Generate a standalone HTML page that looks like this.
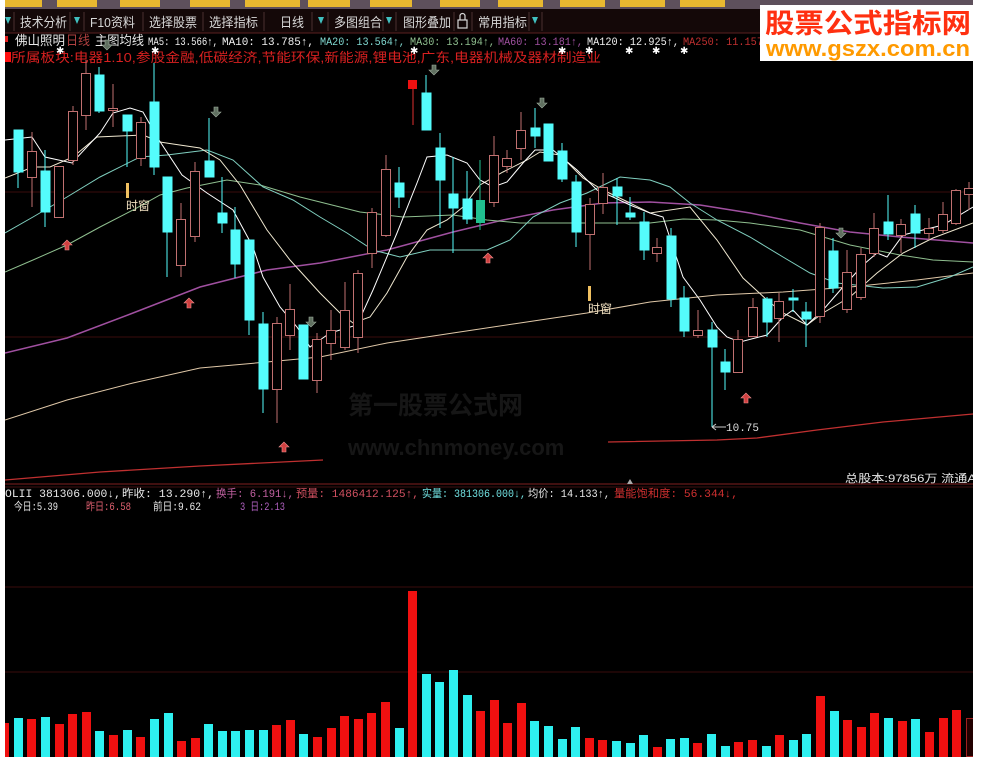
<!DOCTYPE html>
<html><head><meta charset="utf-8"><style>
html,body{margin:0;padding:0;background:#fff;}
svg{display:block;}
text{font-family:"Liberation Sans","Noto Sans CJK SC",sans-serif;}
.m text, text.m{font-family:"Liberation Mono","Noto Sans CJK SC",monospace;}
</style></head><body>
<svg width="987" height="768" viewBox="0 0 987 768" xmlns="http://www.w3.org/2000/svg">
<defs><clipPath id="cl"><rect x="5" y="0" width="968" height="757"/></clipPath></defs>
<rect x="0" y="0" width="987" height="768" fill="#fff"/>
<g clip-path="url(#cl)">
<rect x="0" y="0" width="987" height="757" fill="#000"/>
<rect x="0" y="0" width="987" height="9" fill="#5e505c"/>
<g fill="#e8b830">
<rect x="0" y="0" width="42" height="7"/><rect x="57" y="0" width="40" height="7"/><rect x="120" y="0" width="40" height="7"/><rect x="190" y="0" width="40" height="7"/><rect x="245" y="0" width="55" height="7"/><rect x="308" y="0" width="42" height="7"/><rect x="370" y="0" width="42" height="7"/><rect x="440" y="0" width="40" height="7"/><rect x="498" y="0" width="45" height="7"/><rect x="560" y="0" width="45" height="7"/><rect x="620" y="0" width="45" height="7"/><rect x="680" y="0" width="45" height="7"/></g>
<rect x="0" y="9" width="987" height="24" fill="#140808"/>
<line x1="0" y1="33" x2="987" y2="33" stroke="#5a2020"/>
<g fill="#40c0c0"><path d="M5 17 L11 17 L8 24 Z"/><path d="M74 17 L80 17 L77 24 Z"/><path d="M318 17 L324 17 L321 24 Z"/><path d="M386 17 L392 17 L389 24 Z"/><path d="M532 17 L538 17 L535 24 Z"/></g>
<g stroke="#4a3030"><line x1="14" y1="12" x2="14" y2="31"/><line x1="70" y1="12" x2="70" y2="31"/><line x1="84" y1="12" x2="84" y2="31"/><line x1="143" y1="12" x2="143" y2="31"/><line x1="203" y1="12" x2="203" y2="31"/><line x1="264" y1="12" x2="264" y2="31"/><line x1="312" y1="12" x2="312" y2="31"/><line x1="328" y1="12" x2="328" y2="31"/><line x1="383" y1="12" x2="383" y2="31"/><line x1="396" y1="12" x2="396" y2="31"/><line x1="454" y1="12" x2="454" y2="31"/><line x1="472" y1="12" x2="472" y2="31"/><line x1="529" y1="12" x2="529" y2="31"/><line x1="542" y1="12" x2="542" y2="31"/></g>
<g fill="#d8d8d8" font-size="13">
<text x="20" y="27" textLength="47" lengthAdjust="spacingAndGlyphs">技术分析</text>
<text x="90" y="27" textLength="45" lengthAdjust="spacingAndGlyphs">F10资料</text>
<text x="149" y="27" textLength="48" lengthAdjust="spacingAndGlyphs">选择股票</text>
<text x="209" y="27" textLength="49" lengthAdjust="spacingAndGlyphs">选择指标</text>
<text x="280" y="27" textLength="24" lengthAdjust="spacingAndGlyphs">日线</text>
<text x="334" y="27" textLength="48" lengthAdjust="spacingAndGlyphs">多图组合</text>
<text x="403" y="27" textLength="48" lengthAdjust="spacingAndGlyphs">图形叠加</text>
<text x="478" y="27" textLength="49" lengthAdjust="spacingAndGlyphs">常用指标</text>
</g>
<g fill="none" stroke="#d8d8d8" stroke-width="1.2"><rect x="458" y="20" width="9" height="8"/><path d="M460 20 V16 A2.5 2.5 0 0 1 465 16 V20"/></g>
<rect x="5" y="36" width="3" height="6" fill="#e02020"/>
<text x="15" y="45" fill="#e8e8e8" font-size="13" textLength="50" lengthAdjust="spacingAndGlyphs">佛山照明</text>
<text x="66" y="45" fill="#b04040" font-size="13" textLength="24" lengthAdjust="spacingAndGlyphs">日线</text>
<text x="95" y="45" fill="#e8e8e8" font-size="13" textLength="49" lengthAdjust="spacingAndGlyphs">主图均线</text>
<g font-size="11" class="m">
<text x="148" y="45" fill="#f0f0f0" textLength="70" lengthAdjust="spacingAndGlyphs">MA5: 13.566↑,</text>
<text x="222" y="45" fill="#f0f0f0" textLength="92" lengthAdjust="spacingAndGlyphs">MA10: 13.785↑,</text>
<text x="320" y="45" fill="#80d8d0" textLength="85" lengthAdjust="spacingAndGlyphs">MA20: 13.564↑,</text>
<text x="410" y="45" fill="#90c090" textLength="85" lengthAdjust="spacingAndGlyphs">MA30: 13.194↑,</text>
<text x="498" y="45" fill="#a050a0" textLength="85" lengthAdjust="spacingAndGlyphs">MA60: 13.181↑,</text>
<text x="587" y="45" fill="#f0f0f0" textLength="92" lengthAdjust="spacingAndGlyphs">MA120: 12.925↑,</text>
<text x="683" y="45" fill="#c03030" textLength="80" lengthAdjust="spacingAndGlyphs">MA250: 11.157</text>
</g>
<rect x="5" y="52" width="6" height="10" fill="#ff1010"/>
<text x="11" y="62" fill="#d82020" font-size="13" textLength="590" lengthAdjust="spacingAndGlyphs">所属板块:电器1.10,参股金融,低碳经济,节能环保,新能源,锂电池,广东,电器机械及器材制造业</text>
<g fill="#fff" font-size="10"><text x="56" y="54">✱</text><text x="151" y="54">✱</text><text x="410" y="54">✱</text><text x="558" y="54">✱</text><text x="585" y="54">✱</text><text x="625" y="54">✱</text><text x="652" y="54">✱</text><text x="680" y="54">✱</text></g>
<g stroke="#3a0c0c"><line x1="5" y1="192" x2="973" y2="192"/><line x1="5" y1="337" x2="973" y2="337"/><line x1="5" y1="587" x2="973" y2="587"/><line x1="5" y1="672" x2="973" y2="672"/></g>
<line x1="5" y1="484" x2="973" y2="484" stroke="#802020"/>
<line x1="5" y1="487" x2="973" y2="487" stroke="#401010"/>
<path d="M627 484 L630 479 L633 484 Z" fill="#aaa"/>
<text x="348" y="414" fill="#161616" font-size="25" font-weight="bold">第一股票公式网</text>
<text x="348" y="455" fill="#161616" font-size="22" font-weight="bold">www.chnmoney.com</text>
<g fill="none" stroke-width="1">
<polyline stroke="#a050a0" stroke-width="1.5" points="5,353 67,338 133,313 200,287 267,270 320,263 387,250 453,232 503,220 553,210 603,203 650,202 700,205 750,213 800,223 850,232 900,237 973,243"/>
<polyline stroke="#e0c8a8" points="5,420 67,400 133,383 200,368 267,362 320,357 387,343 453,333 520,323 587,313 650,302 717,295 783,292 850,287 917,280 973,273"/>
<polyline stroke="#8fbf8f" points="5,272 33,260 67,245 100,227 133,210 160,195 187,188 227,180 260,185 300,197 320,202 360,212 403,217 453,215 487,220 520,223 587,223 650,223 683,219 717,220 750,223 800,230 850,245 900,255 933,260 973,262"/>
<polyline stroke="#80d0c0" points="5,233 33,217 67,197 100,177 140,157 167,155 207,150 233,160 263,187 293,200 320,217 347,233 373,250 400,257 430,250 487,250 510,240 533,217 560,203 587,193 620,177 650,180 670,187 690,203 717,220 750,237 783,257 810,273 837,283 883,288 917,287 950,277 973,267"/>
<polyline stroke="#f0e8d0" points="5,178 33,167 50,167 73,157 97,137 143,135 160,142 173,144 200,148 220,160 240,185 267,230 290,260 320,293 340,313 353,323 370,317 387,293 407,257 427,230 447,220 463,207 480,185 503,172 527,160 540,152 560,155 583,178 603,190 630,203 650,213 690,207 717,240 743,278 767,300 783,313 807,325 823,313 850,297 877,273 903,253 933,238 973,223"/>
<polyline stroke="#ffffff" points="5,140 32,137 45,157 72,163 100,133 113,113 130,108 143,112 157,137 182,175 207,193 233,210 253,247 263,277 280,307 297,327 310,347 320,340 330,333 357,325 373,290 397,233 417,183 427,157 447,155 467,163 480,180 493,187 507,182 523,163 535,150 553,150 577,170 597,190 613,197 630,205 650,213 663,217 673,247 683,277 700,300 717,327 727,337 740,342 767,335 783,317 793,310 807,325 823,310 843,287 863,265 877,253 887,257 903,235 923,230 943,225 973,207"/>
<polyline stroke="#c03030" stroke-width="1.3" points="5,480 100,472 200,466 323,460"/>
<polyline stroke="#c03030" stroke-width="1.3" points="608,442 717,440 757,438 817,430 883,422 973,414"/>
</g>
<g stroke="#c07070" fill="#000" stroke-width="1">
<line x1="32" y1="132" x2="32" y2="207"/><rect x="27.5" y="151.5" width="9" height="26"/>
<line x1="59" y1="166" x2="59" y2="217"/><rect x="54.5" y="166.5" width="9" height="51"/>
<line x1="73" y1="106" x2="73" y2="165"/><rect x="68.5" y="111.5" width="9" height="49"/>
<line x1="86" y1="60" x2="86" y2="130"/><rect x="81.5" y="73.5" width="9" height="42"/>
<line x1="113" y1="84" x2="113" y2="127"/><rect x="108.5" y="108.5" width="9" height="2"/>
<line x1="141" y1="117" x2="141" y2="166"/><rect x="136.5" y="122.5" width="9" height="36"/>
<line x1="181" y1="203" x2="181" y2="277"/><rect x="176.5" y="219.5" width="9" height="46"/>
<line x1="195" y1="162" x2="195" y2="242"/><rect x="190.5" y="171.5" width="9" height="65"/>
<line x1="277" y1="317" x2="277" y2="423"/><rect x="272.5" y="323.5" width="9" height="66"/>
<line x1="290" y1="284" x2="290" y2="350"/><rect x="285.5" y="309.5" width="9" height="26"/>
<line x1="317" y1="333" x2="317" y2="393"/><rect x="312.5" y="339.5" width="9" height="41"/>
<line x1="331" y1="310" x2="331" y2="360"/><rect x="326.5" y="330.5" width="9" height="13"/>
<line x1="345" y1="282" x2="345" y2="350"/><rect x="340.5" y="310.5" width="9" height="37"/>
<line x1="358" y1="270" x2="358" y2="353"/><rect x="353.5" y="273.5" width="9" height="64"/>
<line x1="372" y1="208" x2="372" y2="268"/><rect x="367.5" y="212.5" width="9" height="41"/>
<line x1="386" y1="155" x2="386" y2="237"/><rect x="381.5" y="169.5" width="9" height="66"/>
<line x1="494" y1="136" x2="494" y2="207"/><rect x="489.5" y="155.5" width="9" height="47"/>
<line x1="507" y1="150" x2="507" y2="173"/><rect x="502.5" y="158.5" width="9" height="8"/>
<line x1="521" y1="112" x2="521" y2="160"/><rect x="516.5" y="130.5" width="9" height="18"/>
<line x1="590" y1="198" x2="590" y2="270"/><rect x="585.5" y="204.5" width="9" height="30"/>
<line x1="603" y1="173" x2="603" y2="214"/><rect x="598.5" y="187.5" width="9" height="16"/>
<line x1="657" y1="238" x2="657" y2="262"/><rect x="652.5" y="247.5" width="9" height="6"/>
<line x1="698" y1="310" x2="698" y2="338"/><rect x="693.5" y="330.5" width="9" height="5"/>
<line x1="738" y1="330" x2="738" y2="372"/><rect x="733.5" y="339.5" width="9" height="33"/>
<line x1="753" y1="298" x2="753" y2="336"/><rect x="748.5" y="307.5" width="9" height="29"/>
<line x1="779" y1="293" x2="779" y2="342"/><rect x="774.5" y="301.5" width="9" height="17"/>
<line x1="820" y1="223" x2="820" y2="323"/><rect x="815.5" y="227.5" width="9" height="89"/>
<line x1="847" y1="250" x2="847" y2="313"/><rect x="842.5" y="272.5" width="9" height="37"/>
<line x1="861" y1="248" x2="861" y2="300"/><rect x="856.5" y="254.5" width="9" height="43"/>
<line x1="874" y1="213" x2="874" y2="257"/><rect x="869.5" y="228.5" width="9" height="25"/>
<line x1="901" y1="219" x2="901" y2="253"/><rect x="896.5" y="224.5" width="9" height="11"/>
<line x1="929" y1="218" x2="929" y2="240"/><rect x="924.5" y="228.5" width="9" height="5"/>
<line x1="943" y1="202" x2="943" y2="233"/><rect x="938.5" y="214.5" width="9" height="16"/>
<line x1="956" y1="189" x2="956" y2="225"/><rect x="951.5" y="190.5" width="9" height="33"/>
<line x1="969" y1="182" x2="969" y2="210"/><rect x="964.5" y="188.5" width="9" height="6"/>
</g>
<g stroke="#54fcfc" fill="#54fcfc" stroke-width="1">
<line x1="18" y1="130" x2="18" y2="188"/><rect x="14" y="130" width="9" height="42"/>
<line x1="45" y1="150" x2="45" y2="227"/><rect x="41" y="171" width="9" height="41"/>
<line x1="99" y1="67" x2="99" y2="113"/><rect x="95" y="75" width="9" height="36"/>
<line x1="127" y1="115" x2="127" y2="167"/><rect x="123" y="115" width="9" height="16"/>
<line x1="154" y1="63" x2="154" y2="175"/><rect x="150" y="102" width="9" height="65"/>
<line x1="167" y1="177" x2="167" y2="277"/><rect x="163" y="177" width="9" height="55"/>
<line x1="209" y1="118" x2="209" y2="177"/><rect x="205" y="161" width="9" height="16"/>
<line x1="222" y1="177" x2="222" y2="233"/><rect x="218" y="213" width="9" height="10"/>
<line x1="235" y1="207" x2="235" y2="278"/><rect x="231" y="230" width="9" height="34"/>
<line x1="249" y1="240" x2="249" y2="335"/><rect x="245" y="240" width="9" height="80"/>
<line x1="263" y1="312" x2="263" y2="413"/><rect x="259" y="324" width="9" height="65"/>
<line x1="303" y1="325" x2="303" y2="379"/><rect x="299" y="325" width="9" height="54"/>
<line x1="399" y1="167" x2="399" y2="208"/><rect x="395" y="183" width="9" height="14"/>
<line x1="426" y1="75" x2="426" y2="130"/><rect x="422" y="93" width="9" height="37"/>
<line x1="440" y1="133" x2="440" y2="228"/><rect x="436" y="148" width="9" height="32"/>
<line x1="453" y1="157" x2="453" y2="253"/><rect x="449" y="194" width="9" height="14"/>
<line x1="467" y1="171" x2="467" y2="224"/><rect x="463" y="199" width="9" height="20"/>
<line x1="535" y1="108" x2="535" y2="148"/><rect x="531" y="128" width="9" height="8"/>
<line x1="548" y1="124" x2="548" y2="161"/><rect x="544" y="124" width="9" height="37"/>
<line x1="562" y1="143" x2="562" y2="182"/><rect x="558" y="151" width="9" height="28"/>
<line x1="576" y1="175" x2="576" y2="247"/><rect x="572" y="182" width="9" height="50"/>
<line x1="617" y1="178" x2="617" y2="225"/><rect x="613" y="187" width="9" height="9"/>
<line x1="630" y1="197" x2="630" y2="220"/><rect x="626" y="213" width="9" height="4"/>
<line x1="644" y1="212" x2="644" y2="260"/><rect x="640" y="222" width="9" height="28"/>
<line x1="671" y1="228" x2="671" y2="307"/><rect x="667" y="236" width="9" height="63"/>
<line x1="684" y1="286" x2="684" y2="337"/><rect x="680" y="298" width="9" height="33"/>
<line x1="712" y1="322" x2="712" y2="427"/><rect x="708" y="330" width="9" height="17"/>
<line x1="725" y1="349" x2="725" y2="390"/><rect x="721" y="362" width="9" height="10"/>
<line x1="767" y1="297" x2="767" y2="337"/><rect x="763" y="299" width="9" height="23"/>
<line x1="793" y1="289" x2="793" y2="312"/><rect x="789" y="298" width="9" height="2"/>
<line x1="806" y1="302" x2="806" y2="347"/><rect x="802" y="312" width="9" height="7"/>
<line x1="833" y1="238" x2="833" y2="293"/><rect x="829" y="251" width="9" height="37"/>
<line x1="888" y1="195" x2="888" y2="240"/><rect x="884" y="222" width="9" height="12"/>
<line x1="915" y1="205" x2="915" y2="248"/><rect x="911" y="214" width="9" height="19"/>
</g>
<line x1="480" y1="160" x2="480" y2="230" stroke="#20c090"/><rect x="476" y="200" width="9" height="23" fill="#20c090"/>
<line x1="413" y1="81" x2="413" y2="125" stroke="#e03030"/><rect x="408" y="80" width="9" height="9" fill="#ee1010"/>
<line x1="712" y1="427" x2="726" y2="427" stroke="#ccc"/><path d="M712 427 L716 424 M712 427 L716 430" stroke="#ccc"/>
<text x="726" y="431" fill="#ddd" font-size="11" class="m">10.75</text>
<rect x="126" y="183" width="3" height="15" fill="#f0c060"/><text x="126" y="210" fill="#f0e0c0" font-size="12">时窗</text>
<rect x="588" y="286" width="3" height="15" fill="#f0c060"/><text x="588" y="313" fill="#f0e0c0" font-size="12">时窗</text>
<g fill="#d04040" stroke="#f09090" stroke-width="0.6">
<path d="M67 240 L62 245 L65 245 L65 250 L69 250 L69 245 L72 245 Z"/>
<path d="M189 298 L184 303 L187 303 L187 308 L191 308 L191 303 L194 303 Z"/>
<path d="M284 442 L279 447 L282 447 L282 452 L286 452 L286 447 L289 447 Z"/>
<path d="M488 253 L483 258 L486 258 L486 263 L490 263 L490 258 L493 258 Z"/>
<path d="M746 393 L741 398 L744 398 L744 403 L748 403 L748 398 L751 398 Z"/>
</g>
<g fill="#607060" stroke="#a0b0a0" stroke-width="0.6">
<path d="M216 117 L211 112 L214 112 L214 107 L218 107 L218 112 L221 112 Z"/>
<path d="M311 327 L306 322 L309 322 L309 317 L313 317 L313 322 L316 322 Z"/>
<path d="M434 75 L429 70 L432 70 L432 65 L436 65 L436 70 L439 70 Z"/>
<path d="M542 108 L537 103 L540 103 L540 98 L544 98 L544 103 L547 103 Z"/>
<path d="M841 238 L836 233 L839 233 L839 228 L843 228 L843 233 L846 233 Z"/>
<path d="M107 50 L102 45 L105 45 L105 40 L109 40 L109 45 L112 45 Z"/>
</g>
<text x="845" y="482" fill="#e8e8e8" font-size="11" textLength="142" lengthAdjust="spacingAndGlyphs">总股本:97856万 流通A:4</text>
<g font-size="11" class="m">
<text x="5" y="497" fill="#e8e8e8" textLength="116" lengthAdjust="spacingAndGlyphs">OLII 381306.000↓,</text>
<text x="122" y="497" fill="#e8e8e8" textLength="92" lengthAdjust="spacingAndGlyphs">昨收: 13.290↑,</text>
<text x="216" y="497" fill="#c060a0" textLength="78" lengthAdjust="spacingAndGlyphs">换手: 6.191↓,</text>
<text x="296" y="497" fill="#d05060" textLength="123" lengthAdjust="spacingAndGlyphs">预量: 1486412.125↑,</text>
<text x="422" y="497" fill="#70e0e0" textLength="104" lengthAdjust="spacingAndGlyphs">实量: 381306.000↓,</text>
<text x="528" y="497" fill="#e8e8e8" textLength="82" lengthAdjust="spacingAndGlyphs">均价: 14.133↑,</text>
<text x="614" y="497" fill="#d03030" textLength="124" lengthAdjust="spacingAndGlyphs">量能饱和度: 56.344↓,</text>
<text x="14" y="510" fill="#e8e8e8" textLength="44" lengthAdjust="spacingAndGlyphs">今日:5.39</text>
<text x="86" y="510" fill="#e06070" textLength="45" lengthAdjust="spacingAndGlyphs">昨日:6.58</text>
<text x="153" y="510" fill="#e8e8e8" textLength="48" lengthAdjust="spacingAndGlyphs">前日:9.62</text>
<text x="240" y="510" fill="#b060c0" textLength="45" lengthAdjust="spacingAndGlyphs">3 日:2.13</text>
</g>
<g fill="#f01010">
<rect x="5" y="723" width="4" height="34"/><rect x="27" y="719" width="9" height="38"/><rect x="55" y="724" width="9" height="33"/><rect x="68" y="714" width="9" height="43"/><rect x="82" y="712" width="9" height="45"/><rect x="109" y="735" width="9" height="22"/><rect x="136" y="737" width="9" height="20"/><rect x="177" y="741" width="9" height="16"/><rect x="191" y="738" width="9" height="19"/><rect x="272" y="725" width="9" height="32"/><rect x="286" y="720" width="9" height="37"/><rect x="313" y="737" width="9" height="20"/><rect x="327" y="728" width="9" height="29"/><rect x="340" y="716" width="9" height="41"/><rect x="354" y="719" width="9" height="38"/><rect x="367" y="713" width="9" height="44"/><rect x="381" y="702" width="9" height="55"/><rect x="408" y="591" width="9" height="166"/><rect x="476" y="711" width="9" height="46"/><rect x="490" y="700" width="9" height="57"/><rect x="503" y="723" width="9" height="34"/><rect x="517" y="703" width="9" height="54"/><rect x="585" y="738" width="9" height="19"/><rect x="598" y="740" width="9" height="17"/><rect x="653" y="747" width="9" height="10"/><rect x="693" y="743" width="9" height="14"/><rect x="734" y="742" width="9" height="15"/><rect x="748" y="740" width="9" height="17"/><rect x="775" y="735" width="9" height="22"/><rect x="816" y="696" width="9" height="61"/><rect x="843" y="720" width="9" height="37"/><rect x="857" y="727" width="9" height="30"/><rect x="870" y="713" width="9" height="44"/><rect x="898" y="721" width="9" height="36"/><rect x="925" y="732" width="9" height="25"/><rect x="939" y="718" width="9" height="39"/><rect x="952" y="710" width="9" height="47"/>
</g>
<rect x="966.5" y="718.5" width="9" height="38" fill="#200" stroke="#a02020"/>
<g fill="#2ef0f0">
<rect x="14" y="718" width="9" height="39"/><rect x="41" y="717" width="9" height="40"/><rect x="95" y="731" width="9" height="26"/><rect x="123" y="730" width="9" height="27"/><rect x="150" y="719" width="9" height="38"/><rect x="164" y="713" width="9" height="44"/><rect x="204" y="724" width="9" height="33"/><rect x="218" y="731" width="9" height="26"/><rect x="231" y="731" width="9" height="26"/><rect x="245" y="730" width="9" height="27"/><rect x="259" y="730" width="9" height="27"/><rect x="299" y="734" width="9" height="23"/><rect x="395" y="728" width="9" height="29"/><rect x="422" y="674" width="9" height="83"/><rect x="435" y="682" width="9" height="75"/><rect x="449" y="670" width="9" height="87"/><rect x="463" y="695" width="9" height="62"/><rect x="530" y="721" width="9" height="36"/><rect x="544" y="726" width="9" height="31"/><rect x="558" y="739" width="9" height="18"/><rect x="571" y="727" width="9" height="30"/><rect x="612" y="741" width="9" height="16"/><rect x="626" y="743" width="9" height="14"/><rect x="639" y="735" width="9" height="22"/><rect x="666" y="739" width="9" height="18"/><rect x="680" y="738" width="9" height="19"/><rect x="707" y="734" width="9" height="23"/><rect x="721" y="746" width="9" height="11"/><rect x="762" y="746" width="9" height="11"/><rect x="789" y="740" width="9" height="17"/><rect x="802" y="734" width="9" height="23"/><rect x="830" y="711" width="9" height="46"/><rect x="884" y="718" width="9" height="39"/><rect x="911" y="719" width="9" height="38"/>
</g>
</g>
<rect x="760" y="5" width="213" height="56" fill="#fff"/>
<text x="765" y="33" fill="#ff3010" font-size="27" font-weight="bold" textLength="206" lengthAdjust="spacingAndGlyphs">股票公式指标网</text>
<text x="766" y="56" fill="#ff9a00" font-size="22" font-weight="bold" textLength="204" lengthAdjust="spacingAndGlyphs">www.gszx.com.cn</text>
</svg>
</body></html>
